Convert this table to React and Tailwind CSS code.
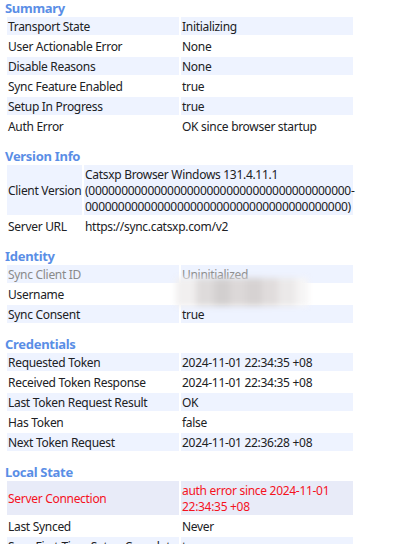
import React from "react";

const zeros = "0".repeat(40);

const sections = [
  {
    title: "Summary",
    label: "w-[172px]",
    rows: [
      ["Transport State", "Initializing"],
      ["User Actionable Error", "None"],
      ["Disable Reasons", "None"],
      ["Sync Feature Enabled", "true"],
      ["Setup In Progress", "true"],
      ["Auth Error", "OK since browser startup"],
    ],
  },
  {
    title: "Version Info",
    label: "w-[75px]",
    rows: [
      [
        "Client Version",
        <>
          Catsxp Browser Windows 131.4.11.1
          <br />({zeros}-
          <br />
          {zeros})
        </>,
      ],
      ["Server URL", "https://sync.catsxp.com/v2"],
    ],
  },
  {
    title: "Identity",
    label: "w-[172px]",
    rows: [
      ["Sync Client ID", "Uninitialized", "muted"],
      ["Username", ""],
      ["Sync Consent", "true"],
    ],
  },
  {
    title: "Credentials",
    label: "w-[172px]",
    rows: [
      ["Requested Token", "2024-11-01 22:34:35 +08"],
      ["Received Token Response", "2024-11-01 22:34:35 +08"],
      ["Last Token Request Result", "OK"],
      ["Has Token", "false"],
      ["Next Token Request", "2024-11-01 22:36:28 +08"],
    ],
  },
  {
    title: "Local State",
    label: "w-[172px]",
    rows: [
      [
        "Server Connection",
        <>
          auth error since 2024-11-01
          <br />
          22:34:35 +08
        </>,
        "error",
      ],
      ["Last Synced", "Never"],
      ["Sync First-Time Setup Complete", "true"],
    ],
  },
];

const Row = ({ row, index }) => {
  const [label, value, kind] = row;
  let cls = index % 2 === 0 ? "bg-[#eef3ff]" : "";
  let text = "text-[#202124]";
  if (kind === "error") {
    cls = "bg-[#e8ebf8]";
    text = "text-[#f5121e]";
  }
  if (kind === "muted") text = "text-[#8a8a8a]";
  return (
    <tr>
      <td className={`${cls} ${text} whitespace-nowrap px-px pt-[2px] pb-0 align-middle`}>{label}</td>
      <td className={`${cls} ${text} whitespace-nowrap px-px pt-[2px] pb-0 align-middle`}>{value}</td>
    </tr>
  );
};

const Section = ({ section, first }) => (
  <div className={first ? "" : "mt-[11px]"}>
    <h2 className="pl-[5px] pt-px text-[13px] font-bold leading-[14px] text-[#5a8ee6]">
      {section.title}
    </h2>
    <table className="ml-[5px] w-[350px] table-fixed border-separate border-spacing-[2px]">
      <colgroup>
        <col className={section.label} />
        <col />
      </colgroup>
      <tbody>
        {section.rows.map((row, i) => (
          <Row key={i} row={row} index={i} />
        ))}
      </tbody>
    </table>
  </div>
);

export default function App() {
  return (
    <div
      className="relative h-[544px] w-[418px] overflow-hidden bg-white text-[12px] leading-[16px] tracking-[-0.3px]"
      style={{ fontFamily: '"Noto Sans", "Open Sans", sans-serif' }}
    >
      {sections.map((s, i) => (
        <Section key={s.title} section={s} first={i === 0} />
      ))}
      <div className="absolute left-[176px] top-[278px] h-[28px] w-[132px] overflow-hidden blur-[3px]">
        <div className="flex h-full">
          <div className="h-full w-[20px] bg-[#f1efef]" />
          <div className="h-full w-[18px] bg-[#dedbdb]" />
          <div className="h-full w-[16px] bg-[#d2cfcf]" />
          <div className="h-full w-[16px] bg-[#dcd8d8]" />
          <div className="h-full w-[16px] bg-[#d6d2d2]" />
          <div className="h-full w-[16px] bg-[#e0dcdc]" />
          <div className="h-full w-[18px] bg-[#ebe9e9]" />
          <div className="h-full w-[12px] bg-[#f6f5f5]" />
        </div>
      </div>
    </div>
  );
}
